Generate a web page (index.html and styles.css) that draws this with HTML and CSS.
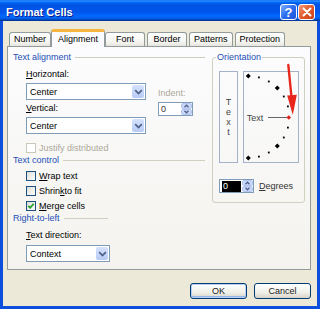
FILE: index.html
```html
<!DOCTYPE html>
<html lang="en">
<head>
  <meta charset="UTF-8" />
  <title>Format Cells</title>
  <link rel="stylesheet" href="styles.css">
</head>
<body>

  <div class="window">
    <div class="titlebar">
      <span class="title">Format Cells</span>
      <span class="cap-btn help">?</span>
      <span class="cap-btn close">
        <svg width="14" height="14" viewBox="0 0 14 14"><path d="M3.5 3.5l7 7M10.5 3.5l-7 7" stroke="#fff" stroke-width="2" stroke-linecap="round"/></svg>
      </span>
    </div>

    <div class="client">
      <div class="tabs">
        <div class="tab">Number</div>
        <div class="tab active">Alignment</div>
        <div class="tab">Font</div>
        <div class="tab">Border</div>
        <div class="tab">Patterns</div>
        <div class="tab">Protection</div>
      </div>

      <div class="panel">
        <div class="left">
          <div class="section">Text alignment</div>
          <div class="align-row">
            <div class="col-selects">
              <div class="label label-h"><u>H</u>orizontal:</div>
              <div class="select">
                <span class="select-text">Center</span>
                <span class="dd"><svg width="9" height="6" viewBox="0 0 9 6"><path d="M1.2 1.2l3.3 3.3 3.3-3.3" fill="none" stroke="#4d6185" stroke-width="1.7"/></svg></span>
              </div>
              <div class="label label-v"><u>V</u>ertical:</div>
              <div class="select select-v">
                <span class="select-text">Center</span>
                <span class="dd"><svg width="9" height="6" viewBox="0 0 9 6"><path d="M1.2 1.2l3.3 3.3 3.3-3.3" fill="none" stroke="#4d6185" stroke-width="1.7"/></svg></span>
              </div>
            </div>
            <div class="col-indent">
              <div class="label disabled">Indent:</div>
              <div class="spin">
                <span class="spin-value">0</span>
                <span class="spin-arrows"><svg width="11" height="12" viewBox="0 0 11 12"><rect x="0.5" y="0.5" width="10" height="5" rx="1.5" fill="#c9d7f9" stroke="#b3c6f2"/><rect x="0.5" y="6.5" width="10" height="5" rx="1.5" fill="#c9d7f9" stroke="#b3c6f2"/><path d="M3.5 4.2l2-2 2 2M3.5 7.8l2 2 2-2" fill="none" stroke="#4d6185" stroke-width="1.3"/></svg></span>
              </div>
            </div>
          </div>

          <div class="check disabled justify"><span class="box"></span>Justify distributed</div>

          <div class="section section-control">Text control</div>
          <div class="check wrap"><span class="box"></span><u>W</u>rap text</div>
          <div class="check"><span class="box"></span>Shrin<u>k</u> to fit</div>
          <div class="check">
            <span class="box"><svg width="8" height="8" viewBox="0 0 8 8"><path d="M1.3 3.8l1.9 2 3.5-4" fill="none" stroke="#21a121" stroke-width="1.7"/></svg></span><u>M</u>erge cells
          </div>

          <div class="section section-rtl">Right-to-left</div>
          <div class="label label-dir"><u>T</u>ext direction:</div>
          <div class="select select-dir">
            <span class="select-text">Context</span>
            <span class="dd"><svg width="9" height="6" viewBox="0 0 9 6"><path d="M1.2 1.2l3.3 3.3 3.3-3.3" fill="none" stroke="#4d6185" stroke-width="1.7"/></svg></span>
          </div>
        </div>

        <fieldset class="orient">
          <legend>Orientation</legend>
          <div class="orient-body">
            <div class="dial-row">
              <div class="vtext">T<br>e<br>x<br>t</div>
              <div class="dial">
                <svg width="54" height="90" viewBox="0 0 54 90">
                  <path d="M4.3 1.5l2.5 2.5-2.5 2.5-2.5-2.5z M33.3 13.5l2.5 2.5-2.5 2.5-2.5-2.5z M33.3 71.5l2.5 2.5-2.5 2.5-2.5-2.5z M4.3 83.5l2.5 2.5-2.5 2.5-2.5-2.5z" fill="#000"/>
                  <g fill="#000">
                    <rect x="14" y="4.5" width="1.8" height="1.8"/>
                    <rect x="23.9" y="8.6" width="1.8" height="1.8"/>
                    <rect x="38.9" y="23.6" width="1.8" height="1.8"/>
                    <rect x="43" y="33.5" width="1.8" height="1.8"/>
                    <rect x="43" y="54.7" width="1.8" height="1.8"/>
                    <rect x="38.9" y="64.6" width="1.8" height="1.8"/>
                    <rect x="23.9" y="79.6" width="1.8" height="1.8"/>
                    <rect x="14" y="83.7" width="1.8" height="1.8"/>
                  </g>
                  <text x="2.7" y="49" class="dial-text">Text</text>
                  <line x1="24" y1="45.5" x2="43" y2="45.5" stroke="#666" stroke-width="1"/>
                  <path d="M44.8 43.2l2.3 2.3-2.3 2.3-2.3-2.3z" fill="#e0201c"/>
                </svg>
                <svg class="arrow" width="16" height="54" viewBox="0 0 16 54">
                  <path d="M4.3 2l3.2 32" stroke="#e8261c" stroke-width="2.4" stroke-linecap="round"/>
                  <path d="M3.2 32.5l9.6-0.8-4 20.3z" fill="#e8261c"/>
                </svg>
              </div>
            </div>
            <div class="degrees-row">
              <div class="spin">
                <span class="spin-value"><span class="sel">0</span></span>
                <span class="spin-arrows"><svg width="11" height="12" viewBox="0 0 11 12"><rect x="0.5" y="0.5" width="10" height="5" rx="1.5" fill="#c9d7f9" stroke="#b3c6f2"/><rect x="0.5" y="6.5" width="10" height="5" rx="1.5" fill="#c9d7f9" stroke="#b3c6f2"/><path d="M3.5 4.2l2-2 2 2M3.5 7.8l2 2 2-2" fill="none" stroke="#4d6185" stroke-width="1.3"/></svg></span>
              </div>
              <span class="degrees-label"><u>D</u>egrees</span>
            </div>
          </div>
        </fieldset>
      </div>

      <div class="buttons">
        <button class="btn default">OK</button>
        <button class="btn">Cancel</button>
      </div>
    </div>
  </div>

</body>
</html>
```

FILE: styles.css
```css
body {
  margin: 0;
  font-family: "Liberation Sans", Arial, sans-serif;
  font-size: 9px;
  color: #000;
}
.window {
  width: 320px;
  height: 309px;
  background: #0b4fdc;
  display: flex;
  flex-direction: column;
}
.titlebar {
  height: 21px;
  box-sizing: border-box;
  padding: 4px 5px 0 6px;
  display: flex;
  align-items: flex-start;
  gap: 1px;
  background: linear-gradient(to bottom, #0058ee 0%, #3593ff 4%, #288eff 6%, #127dff 8%, #036ffc 10%, #0262ee 14%, #0057e5 20%, #0054e3 24%, #0055eb 56%, #005bf5 66%, #026afe 76%, #0062ef 86%, #0052d6 92%, #0040ab 94%, #003092 100%);
}
.title {
  flex: 1;
  color: #fff;
  font-weight: bold;
  font-size: 11px;
  line-height: 17px;
  text-shadow: 1px 1px #0f1b8a;
}
.cap-btn {
  width: 17px;
  height: 16px;
  box-sizing: border-box;
  border: 1px solid #fff;
  border-radius: 3px;
  display: flex;
  align-items: center;
  justify-content: center;
}
.help {
  background: linear-gradient(135deg, #7fb0ff, #2c6cf0 50%, #1f55d8);
  color: #fff;
  font-weight: bold;
  font-size: 13px;
}
.close {
  background: linear-gradient(135deg, #f49a7a, #e15a2c 50%, #c8401a);
}

.client {
  flex: 1;
  margin: 0 3px 3px;
  background: #ece9d8;
  padding: 8px 6px 0 4px;
}

.tabs {
  display: flex;
  align-items: flex-end;
  height: 17px;
  padding-left: 2px;
}
.tab {
  height: 13px;
  line-height: 13px;
  min-width: 30px;
  padding: 0 4px;
  margin-right: 2px;
  text-align: center;
  border: 1px solid #919b9c;
  border-bottom: 0;
  border-radius: 3px 3px 0 0;
  background: linear-gradient(#fff, #f4f4f0 70%, #e6e4dc);
}
.tab.active {
  position: relative;
  height: 15px;
  line-height: 15px;
  padding: 0 6px;
  margin: 0 0 -1px -2px;
  border-top: 3px solid #f6b53f;
  background: #fcfcfe;
}

.panel {
  height: 224px;
  box-sizing: border-box;
  border: 1px solid #919b9c;
  background: linear-gradient(#fcfcfe, #f4f3ee);
  display: flex;
  align-items: flex-start;
  padding: 5px 0 0 5px;
}
.left {
  width: 192px;
}
.section {
  display: flex;
  align-items: center;
  height: 11px;
  line-height: 11px;
  color: #1d4fb6;
}
.section::after {
  content: "";
  flex: 1;
  border-top: 1px solid #d0d0bf;
  margin-left: 4px;
}
.section-control {
  margin-top: 1px;
}
.section-rtl {
  width: 95px;
  margin-top: 1px;
}
.label {
  height: 11px;
  line-height: 11px;
}
.disabled {
  color: #aca899;
}

.align-row {
  display: flex;
  padding-left: 13px;
}
.col-selects {
  width: 120px;
}
.label-h {
  margin-top: 6px;
}
.label-v {
  margin-top: 3px;
}
.col-indent {
  margin-left: 12px;
  padding-top: 25px;
}
.col-indent .spin {
  margin-top: 3px;
}

.select {
  display: flex;
  align-items: center;
  height: 17px;
  box-sizing: border-box;
  border: 1px solid #7f9db9;
  background: #fff;
  padding: 1px 1px 1px 3px;
  margin-top: 3px;
}
.select-v {
  margin-top: 3px;
}
.select-text {
  flex: 1;
}
.dd {
  width: 12px;
  height: 13px;
  border-radius: 2px;
  background: linear-gradient(#d6e1fb, #b8cbf6);
  display: flex;
  align-items: center;
  justify-content: center;
}
.select-dir {
  width: 84px;
  margin-left: 13px;
  margin-top: 4px;
}
.label-dir {
  padding-left: 13px;
  margin-top: 6px;
}

.spin {
  display: flex;
  align-items: center;
  width: 35px;
  height: 14px;
  box-sizing: border-box;
  border: 1px solid #7f9db9;
  background: #fff;
}
.spin-value {
  flex: 1;
  line-height: 12px;
  padding-left: 2px;
  color: #333;
}
.spin-arrows {
  display: flex;
  width: 11px;
  height: 12px;
}
.sel {
  display: block;
  width: 18px;
  height: 11px;
  line-height: 11px;
  background: #000;
  color: #fff;
  padding-left: 1px;
}

.check {
  display: flex;
  align-items: center;
  height: 13px;
  padding-left: 13px;
  margin-top: 2px;
}
.check.justify {
  margin-top: 7px;
}
.check.wrap {
  margin-top: 3px;
}
.box {
  width: 10px;
  height: 10px;
  box-sizing: border-box;
  border: 1px solid #1c5180;
  background: linear-gradient(135deg, #dcdcd7, #fff);
  margin-right: 3px;
  display: flex;
  align-items: center;
  justify-content: center;
}
.check.disabled .box {
  border-color: #cac8bb;
  background: #fff;
}

.orient {
  width: 93px;
  box-sizing: border-box;
  margin: 0 0 0 7px;
  padding: 0;
  border: 1px solid #d0d0bf;
  border-radius: 3px;
  min-width: 0;
}
.orient legend {
  margin-left: 3px;
  padding: 0 1px;
  line-height: 11px;
  color: #1d4fb6;
}
.orient-body {
  padding: 8px 5px 9px 6px;
}
.dial-row {
  display: flex;
  gap: 5px;
}
.vtext {
  width: 19px;
  height: 92px;
  box-sizing: border-box;
  border: 1px solid #a4b2c9;
  display: flex;
  flex-direction: column;
  align-items: center;
  justify-content: center;
  text-align: center;
  line-height: 10px;
  color: #444;
}
.dial {
  position: relative;
  width: 56px;
  height: 92px;
  box-sizing: border-box;
  border: 1px solid #a4b2c9;
}
.dial svg {
  display: block;
}
.dial-text {
  font-family: "Liberation Sans", Arial, sans-serif;
  font-size: 9px;
  fill: #444;
}
.dial .arrow {
  position: absolute;
  left: 40px;
  top: -9px;
  overflow: visible;
}
.degrees-row {
  display: flex;
  align-items: center;
  margin-top: 16px;
}
.degrees-label {
  margin-left: 5px;
  color: #333;
}

.buttons {
  display: flex;
  justify-content: flex-end;
  gap: 7px;
  margin-top: 13px;
}
.btn {
  width: 57px;
  height: 16px;
  padding: 0;
  border: 1px solid #003c74;
  border-radius: 3px;
  background: linear-gradient(#fff, #f0f0ea 60%, #d8d3c8);
  font-family: "Liberation Sans", Arial, sans-serif;
  font-size: 9px;
  color: #222;
}
.btn.default {
  box-shadow: inset 0 0 0 1px #b9cff3, inset 0 -1px 0 1px #96b6ea;
}
```
